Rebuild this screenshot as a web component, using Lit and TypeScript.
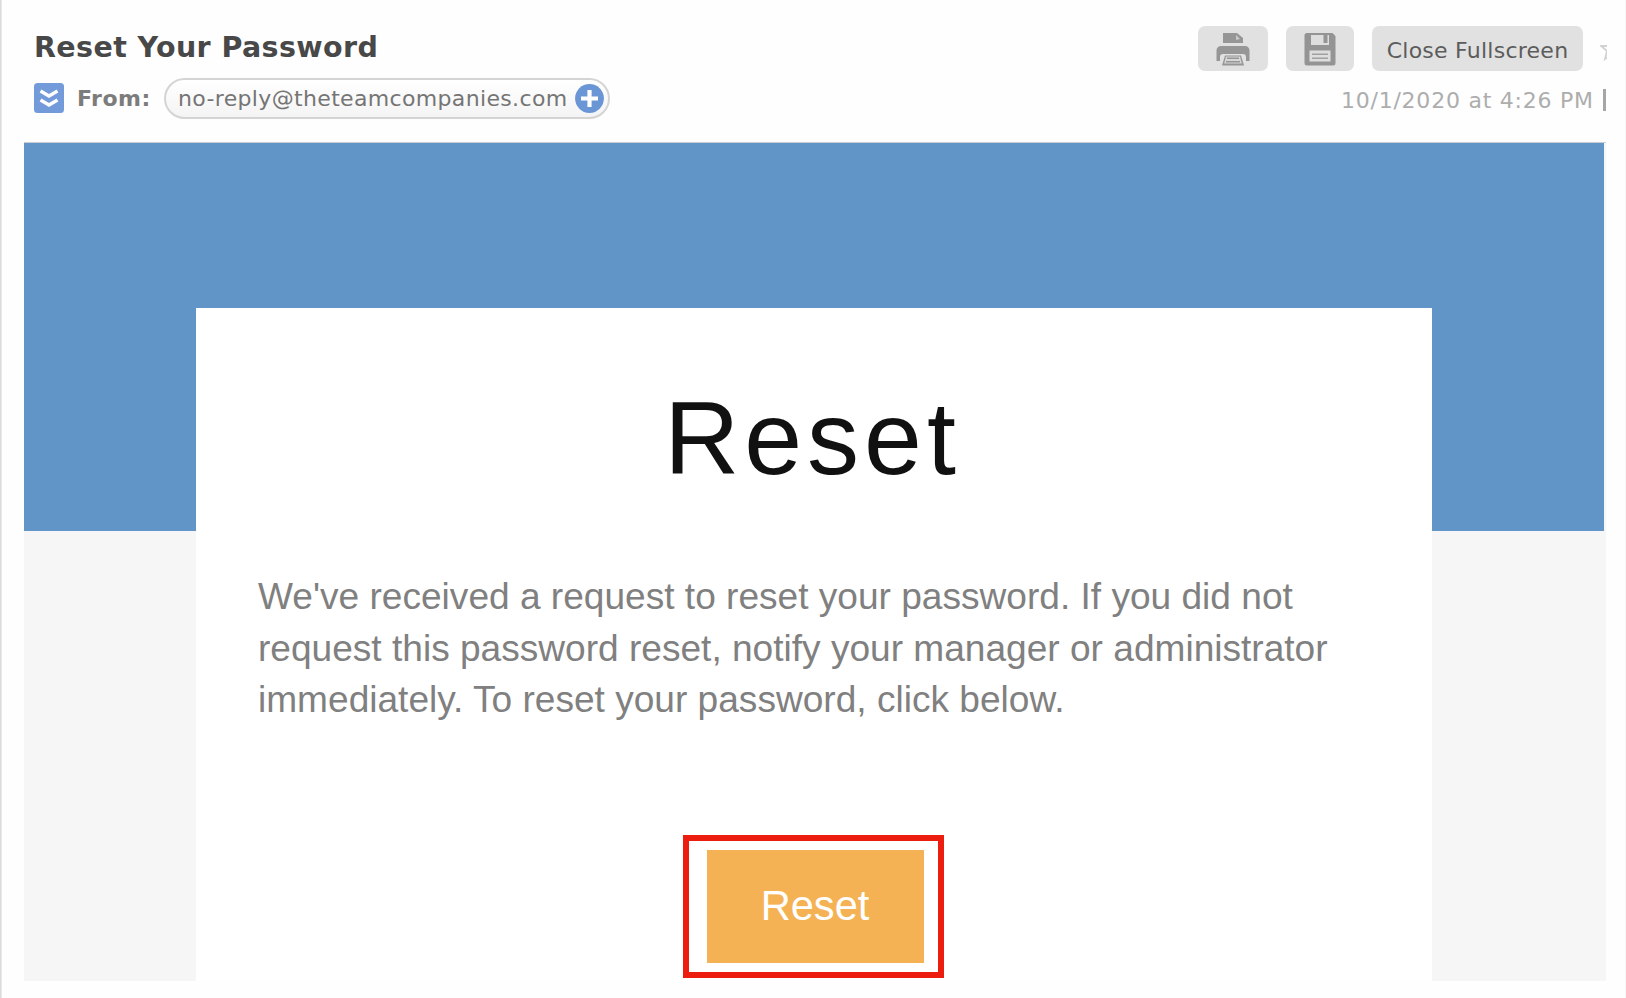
import { LitElement, html, css } from 'lit'

class MailHeader extends LitElement {
  static styles = css`
    :host {
      display: flex;
      justify-content: space-between;
      box-sizing: border-box;
      height: 142px;
      margin-right: 19px;
      padding: 26px 0 0 34px;
      overflow: hidden;
      white-space: nowrap;
      font-family: 'DejaVu Sans', Verdana, sans-serif;
      font-size: 22px;
    }

    svg {
      display: block;
      flex: none;
    }

    .subject {
      margin: 5px 0 0;
      height: 34px;
      line-height: 34px;
      font-size: 28.5px;
      font-weight: bold;
      letter-spacing: 0.4px;
      color: #484848;
    }

    .from {
      display: flex;
      align-items: center;
      height: 40px;
      margin-top: 13px;
    }

    .label {
      flex: none;
      width: 100px;
      box-sizing: border-box;
      padding-left: 13px;
      font-weight: bold;
      letter-spacing: 0.5px;
      color: #7c7c7c;
    }

    .pill {
      display: flex;
      align-items: center;
      flex: none;
      box-sizing: border-box;
      width: 446px;
      height: 41px;
      margin-top: 1px;
      padding-left: 12px;
      border: 2px solid #d4d4d4;
      border-radius: 21px;
      background: linear-gradient(#fff, #f4f4f4);
      color: #757575;
    }

    .address {
      width: 397px;
      letter-spacing: 0.34px;
    }

    .side {
      width: 409px;
    }

    .actions {
      display: flex;
      align-items: center;
    }

    .button {
      display: flex;
      align-items: center;
      justify-content: center;
      flex: none;
      box-sizing: border-box;
      height: 45px;
      border-radius: 7px;
      background: #e1e1e1;
      color: #5c5c5c;
      letter-spacing: 0.25px;
    }

    .print {
      width: 70px;
      margin-right: 18px;
    }

    .save {
      width: 68px;
      margin-right: 18px;
    }

    .close {
      width: 211px;
      margin-right: 17px;
      padding-top: 4px;
    }

    .date {
      display: flex;
      align-items: center;
      height: 28px;
      margin-top: 15px;
      padding-left: 143px;
      color: #adadad;
      letter-spacing: 0.76px;
    }

    .divider {
      flex: none;
      width: 3px;
      height: 22px;
      margin-left: 9px;
      background: #a6a6a6;
    }
  `

  render() {
    return html`
      <div>
        <h1 class="subject">Reset Your Password</h1>
        <div class="from">
          <svg width="30" height="30" viewBox="0 0 30 30">
            <rect width="30" height="30" rx="3.5" fill="#739bd9" />
            <path d="M6.500 8l8.500 5 8.500-5M6.500 17l8.500 5 8.500-5" fill="none" stroke="#fff" stroke-width="3.400" />
          </svg>
          <span class="label">From:</span>
          <span class="pill">
            <span class="address">no-reply@theteamcompanies.com</span>
            <svg width="29" height="29" viewBox="0 0 29 29">
              <circle cx="14.5" cy="14.5" r="14.4" fill="#6b96d6" />
              <path d="M14.500 6v17M6 14.500h17" stroke="#fff" stroke-width="4.200" />
            </svg>
          </span>
        </div>
      </div>
      <div class="side">
        <div class="actions">
          <span class="button print">
            <svg width="34" height="34" viewBox="0 0 34 34" fill="#969696">
              <path d="M7 1h14l6 5v5H7z" />
              <path d="M20 3l4 4-4 1z" fill="#cacaca" />
              <path d="M5 14h24a4.500 4.500 0 0 1 4.500 4.500V29H30v-4a3 3 0 0 0-3-3H7a3 3 0 0 0-3 3v4H.5V18.500A4.500 4.500 0 0 1 5 14z" />
              <path d="M9 23.500h16l3 10H6z" />
              <path d="M10 24.500h14l1.800 7H8.200z" fill="#d6d6d6" />
              <path d="M11 26.300h12M10 29.800h14" stroke="#969696" stroke-width="1.600" />
            </svg>
          </span>
          <span class="button save">
            <svg width="32" height="34" viewBox="0 0 32 34">
              <path d="M3 1h25.500L31.500 4v27a2.500 2.500 0 0 1-2.500 2.500H3A2.500 2.500 0 0 1 .5 31V3.500A2.500 2.500 0 0 1 3 1z" fill="#949494" />
              <path d="M7 3h18v10H7zM5.500 18.500h21v11h-21z" fill="#dedede" />
              <path d="M19.500 3h4v8h-4z" fill="#949494" />
              <path d="M8 22.200h16M8 26.200h16" stroke="#a0a0a0" stroke-width="1.500" />
            </svg>
          </span>
          <span class="button close">Close Fullscreen</span>
          <svg width="24" height="24" viewBox="0 0 24 24">
            <path d="M12 1l3 8h8l-6 5 2 8-7-5-7 5 2-8-6-5h8z" fill="none" stroke="#d2d2d2" stroke-width="1.800" />
          </svg>
        </div>
        <div class="date">10/1/2020 at 4:26 PM<span class="divider"></span></div>
      </div>
    `
  }
}

customElements.define('mail-header', MailHeader)

class MailBody extends LitElement {
  static styles = css`
    :host {
      display: block;
      box-sizing: border-box;
      width: 1582px;
      height: 839px;
      margin-left: 24px;
      padding: 165px 0 0 172px;
      border-top: 1px solid #c9cdd2;
      background:
        linear-gradient(#6195c8, #6195c8) 0 0 / 1580px 388px no-repeat,
        #f6f6f6;
      font-family: 'Liberation Sans', Arial, sans-serif;
    }

    .card {
      display: flex;
      flex-direction: column;
      align-items: center;
      box-sizing: border-box;
      width: 1236px;
      height: 673px;
      padding-top: 70px;
      background: #fff;
    }

    .title {
      margin: 0 3px 0 0;
      height: 120px;
      line-height: 120px;
      font-size: 104px;
      font-weight: normal;
      letter-spacing: 5px;
      color: #111;
    }

    .message {
      width: 1112px;
      margin: 73px 0 0;
      font-size: 37.1px;
      line-height: 51.6px;
      color: #808080;
      white-space: nowrap;
    }

    .highlight {
      display: flex;
      box-sizing: border-box;
      width: 261px;
      height: 143px;
      margin: 109px 0 0 -1px;
      padding: 9px 14px 9px 18px;
      border: 6px solid #ec1c0e;
    }

    .reset {
      flex: 1;
      height: 113px;
      line-height: 111px;
      background: #f4b254;
      color: #fff;
      font-size: 41.600px;
      text-align: center;
      text-indent: -1px;
    }
  `

  render() {
    return html`
      <div class="card">
        <h2 class="title">Reset</h2>
        <p class="message">
          We've received a request to reset your password. If you did not<br />
          request this password reset, notify your manager or administrator<br />
          immediately. To reset your password, click below.
        </p>
        <div class="highlight"><div class="reset">Reset</div></div>
      </div>
    `
  }
}

customElements.define('mail-body', MailBody)

class AppRoot extends LitElement {
  static styles = css`
    :host {
      display: block;
      box-sizing: border-box;
      width: 1626px;
      height: 998px;
      overflow: hidden;
      background: linear-gradient(90deg, #dcdcdc 1px, #e9e9e9 1px 2px, #fefefe 2px 1625px, #f6f6f6 1625px);
    }
  `

  render() {
    return html`
      <mail-header></mail-header>
      <mail-body></mail-body>
    `
  }
}

customElements.define('app-root', AppRoot)
